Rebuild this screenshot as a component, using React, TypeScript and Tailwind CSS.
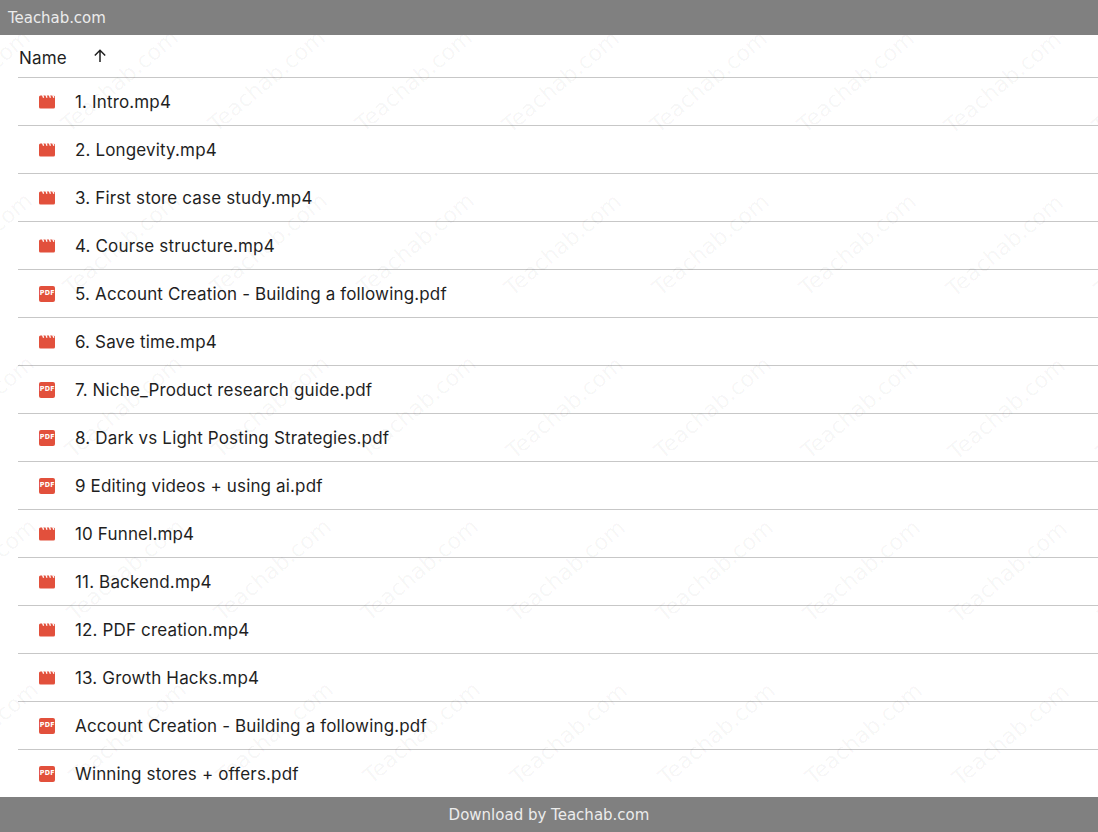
const rows: [string, "v" | "p"][] = [
  ["1. Intro.mp4", "v"],
  ["2. Longevity.mp4", "v"],
  ["3. First store case study.mp4", "v"],
  ["4. Course structure.mp4", "v"],
  ["5. Account Creation - Building a following.pdf", "p"],
  ["6. Save time.mp4", "v"],
  ["7. Niche_Product research guide.pdf", "p"],
  ["8. Dark vs Light Posting Strategies.pdf", "p"],
  ["9 Editing videos + using ai.pdf", "p"],
  ["10 Funnel.mp4", "v"],
  ["11. Backend.mp4", "v"],
  ["12. PDF creation.mp4", "v"],
  ["13. Growth Hacks.mp4", "v"],
  ["Account Creation - Building a following.pdf", "p"],
  ["Winning stores + offers.pdf", "p"],
];

function VideoIcon() {
  return (
    <svg width="16" height="14" viewBox="0 0 16 14" className="shrink-0">
      <rect x="0" y="0.500" width="16" height="13" rx="1.500" fill="#e2503c" />
      <path stroke="#ffffff" strokeWidth="1.300" fill="none" d="M3.600 0l1 2.800M7 0l1 2.800M10.400 0l1 2.800M13.800 0l1 2.800" />
    </svg>
  );
}

function PdfIcon() {
  return (
    <div className="w-4 h-4 shrink-0 rounded-[2px] bg-[#e2503c] flex items-center justify-center">
      <span className="text-white font-bold text-[7px] leading-none tracking-[0.3px] font-['DejaVu_Sans',sans-serif] scale-x-90">PDF</span>
    </div>
  );
}

const marks: [number, number][] = [];
for (let r = 0; r < 5; r++) {
  for (let c = 0; c < 9; c++) {
    marks.push([(c - 1) * 147.3 + 119.5 + r * 2, r * 163 + 45.5 + c * 0.3]);
  }
}

export default function App() {
  return (
    <div className="relative w-[1098px] h-[832px] overflow-hidden bg-white flex flex-col">
      <div className="h-[35px] shrink-0 bg-[#808080] px-2 pt-0.5 flex items-center text-[15px] text-[#ececec] font-['DejaVu_Sans',sans-serif] tracking-[-0.05px]">
        Teachab.com
      </div>
      <div className="flex-1 font-['Inter',sans-serif] text-[#1f1f1f] tracking-[0.15px]">
        <div className="ml-[18px] h-[43px] flex items-center border-b border-[#c7c7c7] text-[17px] pt-[5px]">
          <span className="ml-px">Name</span>
          <svg width="14" height="14" viewBox="0 0 14 14" className="ml-[26px] -mt-1.5" fill="none" stroke="#1f1f1f" strokeWidth="1.500">
            <path d="M7 13V1.500M1.800 6.500 7 1.300l5.200 5.200" />
          </svg>
        </div>
        {rows.map(([name, kind], i) => (
          <div key={name} className={`ml-[18px] flex items-center pl-[21px] text-[17px] ${i < rows.length - 1 ? "h-[48px] border-b border-[#c7c7c7]" : "h-[47px]"}`}>
            {kind === "v" ? <VideoIcon /> : <PdfIcon />}
            <span className="ml-[20px] pt-0.5">{name}</span>
          </div>
        ))}
      </div>
      <div className="h-[35px] shrink-0 bg-[#808080] pt-0.5 flex items-center justify-center text-[15px] text-[#ececec] font-['DejaVu_Sans',sans-serif]">
        Download by Teachab.com
      </div>
      <div className="absolute left-0 top-[35px] right-0 bottom-[35px] overflow-hidden pointer-events-none">
        {marks.map(([x, y], i) => (
          <span
            key={i}
            className="absolute text-[22px] leading-none whitespace-nowrap text-[#000000]/[0.045] font-['DejaVu_Sans',sans-serif] -translate-x-1/2 -translate-y-1/2 -rotate-[40deg]"
            style={{ left: x, top: y }}
          >
            Teachab.com
          </span>
        ))}
      </div>
    </div>
  );
}
